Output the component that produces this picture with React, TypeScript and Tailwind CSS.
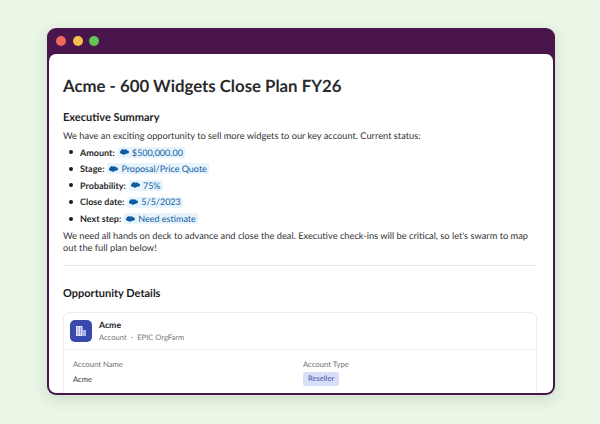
const fields = [
  { label: 'Amount:', value: '$500,000.00' },
  { label: 'Stage:', value: 'Proposal/Price Quote' },
  { label: 'Probability:', value: '75%' },
  { label: 'Close date:', value: '5/5/2023' },
  { label: 'Next step:', value: 'Need estimate' },
];

const CloudIcon = () => (
  <svg width="9" height="6" viewBox="0 0 9 6" className="shrink-0">
    <path
      d="M3 0.2C3.6 0.2 4 0.4 4.4 0.7C4.9 0.3 5.4 0.2 6 0.4C6.5 0.5 6.9 0.9 7.1 1.2C8.2 1.2 9 2 9 2.9C9 3.9 8.1 4.6 7 4.5C6.6 5 6 5.2 5.4 5C5 5.6 4.3 5.9 3.5 5.7C3 5.6 2.6 5.3 2.4 5C1.1 5.2 0 4.4 0 3.3C0 2.6 0.3 2.1 0.8 1.8C0.8 0.9 1.8 0.2 3 0.2Z"
      fill="#0f5ca5"
    />
  </svg>
);

const App = () => {
  return (
    <div className="w-[600px] h-[424px] bg-[#eaf6e6] pt-[28px] pl-[47px] font-['Lato',sans-serif] [text-rendering:geometricPrecision] overflow-hidden">
      <div className="w-[508px] h-[367px] bg-[#4a154b] rounded-[9px] px-[2px] pb-[2px] flex flex-col shadow-[0_4px_14px_rgba(40,80,40,0.16)]">
        <div className="h-[26px] shrink-0 flex items-center gap-[6.5px] pl-[7px]">
          <span className="w-[10px] h-[10px] rounded-full bg-[#ec6a5e]" />
          <span className="w-[10px] h-[10px] rounded-full bg-[#f4bf4f]" />
          <span className="w-[10px] h-[10px] rounded-full bg-[#61c554]" />
        </div>
        <div className="flex-1 bg-white rounded-t-[7px] rounded-b-[7px] overflow-hidden pl-[14px] pr-[16px] pt-[20px] text-[#1d1c1d]">
          <h1 className="text-[16.8px] leading-[23px] font-bold text-[#2b2a2b]">Acme - 600 Widgets Close Plan FY26</h1>
          <h2 className="mt-[12.5px] text-[11px] leading-[16px] font-bold">Executive Summary</h2>
          <p className="mt-[2px] text-[9.25px] leading-[15px] text-[#333]">
            We have an exciting opportunity to sell more widgets to our key account. Current status:
          </p>
          <ul className="mt-[1.5px] flex flex-col">
            {fields.map((field) => (
              <li key={field.label} className="h-[16.6px] flex items-center text-[9px]">
                <span className="w-[4px] h-[4px] rounded-full bg-[#1d1c1d] ml-[6px] mr-[7px]" />
                <span className="font-bold text-[#2b2a2b]">{field.label}</span>
                <span className="ml-[3px] px-[2px] h-[11px] flex items-center gap-[3px] bg-[#e8f4fb] rounded-[2px] text-[#0f5ca5]">
                  <CloudIcon />
                  {field.value}
                </span>
              </li>
            ))}
          </ul>
          <p className="mt-[3px] text-[9.25px] leading-[12.5px] text-[#333]">
            We need all hands on deck to advance and close the deal. Executive check-ins will be critical, so let's swarm to map out the full plan below!
          </p>
          <div className="mt-[10px] h-px bg-[#e6e6e6]" />
          <h2 className="mt-[20px] text-[11px] leading-[16px] font-bold">Opportunity Details</h2>
          <div className="mt-[10px] border border-[#ececec] rounded-[7px]">
            <div className="h-[37px] flex items-center gap-[7px] pl-[6px] border-b border-[#f0f0f0]">
              <div className="w-[22px] h-[22px] rounded-[5px] bg-[#3949ab] flex items-center justify-center">
                <svg width="12" height="12" viewBox="0 0 12 12">
                  <rect x="1" y="1" width="6.5" height="10" fill="#dfe4fa" />
                  <rect x="7.5" y="5" width="3.5" height="6" fill="#aab5ee" />
                  <path d="M2.5 3h1M5 3h1M2.5 5h1M5 5h1M2.5 7h1M5 7h1M2.5 9h1M5 9h1" stroke="#3949ab" strokeWidth="0.9" />
                </svg>
              </div>
              <div className="flex flex-col">
                <span className="text-[8.7px] leading-[12px] font-bold text-[#1d1c1d]">Acme</span>
                <span className="text-[7.6px] leading-[12px] text-[#777]">Account &nbsp;-&nbsp; EPIC OrgFarm</span>
              </div>
            </div>
            <div className="grid grid-cols-[230px_1fr] pl-[9px] pt-[8px] pb-[24px]">
              <div className="flex flex-col">
                <span className="text-[7.7px] leading-[12px] text-[#6f6f6f]">Account Name</span>
                <span className="mt-[2px] text-[7.7px] leading-[14px] text-[#333]">Acme</span>
              </div>
              <div className="flex flex-col items-start">
                <span className="text-[7.7px] leading-[12px] text-[#6f6f6f]">Account Type</span>
                <span className="mt-[2px] px-[5px] h-[14px] flex items-center rounded-[2px] bg-[#d9dff8] text-[7.6px] text-[#3f51a8]">Reseller</span>
              </div>
            </div>
          </div>
        </div>
      </div>
    </div>
  );
};

export default App;
